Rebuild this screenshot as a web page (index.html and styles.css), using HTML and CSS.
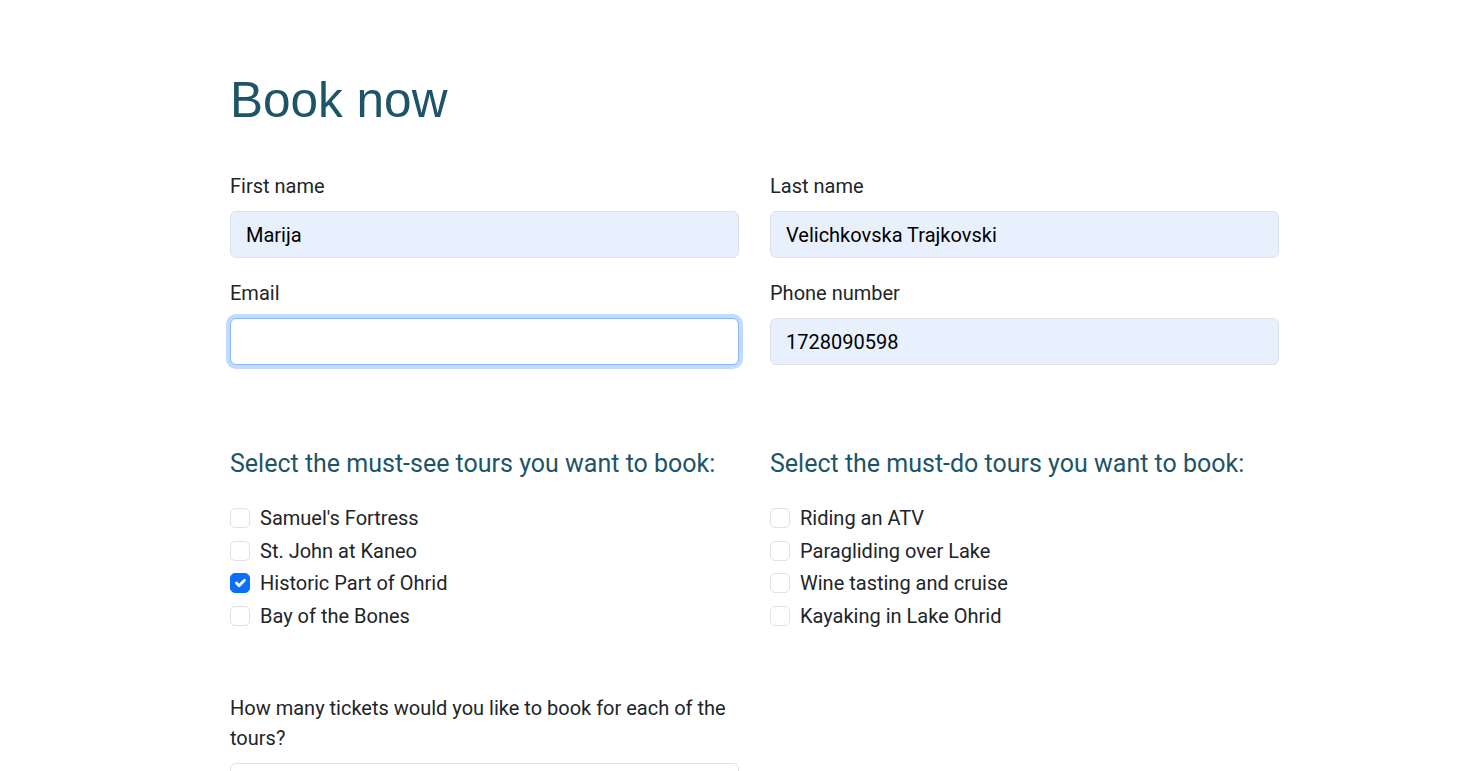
FILE: index.html
```html
<!DOCTYPE html>
<html lang="en">
<head>
<meta charset="utf-8">
<title>Book now</title>
<link rel="stylesheet" href="styles.css">
</head>
<body>
<main class="page">
  <h1 class="title">Book now</h1>
  <form class="form">
    <div class="grid">
      <div class="field">
        <label class="label" for="fn">First name</label>
        <input class="input filled" id="fn" type="text" value="Marija">
      </div>
      <div class="field">
        <label class="label" for="ln">Last name</label>
        <input class="input filled" id="ln" type="text" value="Velichkovska Trajkovski">
      </div>
      <div class="field">
        <label class="label" for="em">Email</label>
        <input class="input focused" id="em" type="email" value="">
      </div>
      <div class="field">
        <label class="label" for="ph">Phone number</label>
        <input class="input filled" id="ph" type="text" value="1728090598">
      </div>
    </div>

    <div class="grid tours">
      <fieldset class="group">
        <h5 class="group-title">Select the must-see tours you want to book:</h5>
        <label class="check"><span class="box"></span>Samuel's Fortress</label>
        <label class="check"><span class="box"></span>St. John at Kaneo</label>
        <label class="check"><span class="box checked"><svg viewBox="0 0 20 20" width="20" height="20"><path d="M6 10l3 3l6-6" fill="none" stroke="#fff" stroke-width="3" stroke-linecap="round" stroke-linejoin="round"/></svg></span>Historic Part of Ohrid</label>
        <label class="check"><span class="box"></span>Bay of the Bones</label>
      </fieldset>
      <fieldset class="group">
        <h5 class="group-title">Select the must-do tours you want to book:</h5>
        <label class="check"><span class="box"></span>Riding an ATV</label>
        <label class="check"><span class="box"></span>Paragliding over Lake</label>
        <label class="check"><span class="box"></span>Wine tasting and cruise</label>
        <label class="check"><span class="box"></span>Kayaking in Lake Ohrid</label>
      </fieldset>
    </div>

    <div class="grid tickets">
      <div class="field">
        <label class="label label-tickets" for="tk">How many tickets would you like to book for each of the tours?</label>
        <input class="input" id="tk" type="number">
      </div>
    </div>
  </form>
</main>
</body>
</html>
```

FILE: styles.css
```css
* { box-sizing: border-box; }

html, body {
  margin: 0;
  padding: 0;
  background: #fff;
}

body {
  font-family: Roboto, "Liberation Sans", Arial, sans-serif;
  font-size: 20px;
  line-height: 30px;
  color: #212529;
}

.page {
  padding-left: 230px;
  width: 1279px;
}

.title {
  font-family: "Liberation Sans", Arial, sans-serif;
  font-weight: 400;
  font-size: 49.5px;
  line-height: 60px;
  color: #1e5467;
  margin: 70px 0 41px;
}

.form { margin: 0; }

.grid {
  display: grid;
  grid-template-columns: 509px 509px;
  column-gap: 31px;
}

.field {
  display: flex;
  flex-direction: column;
  margin-bottom: 20px;
}

.label {
  display: block;
  margin-bottom: 10px;
}

.input {
  display: block;
  width: 100%;
  height: 47px;
  padding: 7px 15px;
  font-family: Roboto, "Liberation Sans", Arial, sans-serif;
  font-size: 20px;
  line-height: 30px;
  color: #000;
  background: #fff;
  border: 1px solid #dee2e6;
  border-radius: 6px;
  outline: none;
}

.input.filled { background: #e8f0fe; }

.input.focused {
  border-color: #86b7fe;
  box-shadow: 0 0 0 4px rgba(13, 110, 253, 0.25);
}

.tours { margin-top: 64px; }

.group {
  border: 0;
  margin: 0;
  padding: 0;
  min-width: 0;
}

.group-title {
  font-size: 25px;
  font-weight: 400;
  line-height: 30px;
  color: #1e5467;
  margin: 0 0 24px;
}

.check {
  display: flex;
  align-items: flex-start;
  gap: 10px;
  margin-bottom: 2.5px;
}

.box {
  flex: 0 0 20px;
  width: 20px;
  height: 20px;
  margin-top: 5px;
  border: 1px solid #dee2e6;
  border-radius: 5px;
  background: #fff;
  display: flex;
  align-items: center;
  justify-content: center;
}

.box.checked {
  background: #0d6efd;
  border-color: #0d6efd;
}

.box svg { display: block; }

.tickets { margin-top: 60px; }
```
